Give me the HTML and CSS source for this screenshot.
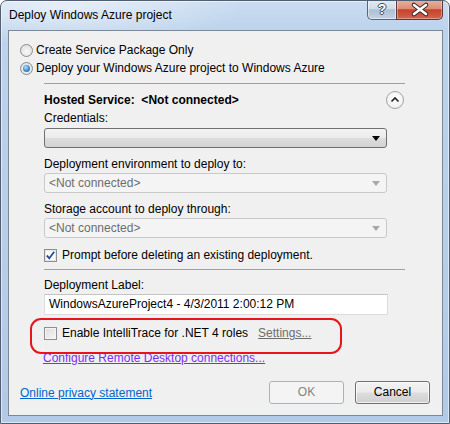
FILE: index.html
```html
<!DOCTYPE html>
<html>
<head>
<meta charset="utf-8">
<link rel="stylesheet" href="styles.css">
</head>
<body>
<div class="window">
  <div class="titlebar">
    <div class="title">Deploy Windows Azure project</div>
    <div class="caption-btns">
      <div class="btn-help">?</div>
      <div class="btn-close">
        <svg width="46" height="19" viewBox="0 0 46 19">
          <path d="M17 5 L29 14 M17 14 L29 5" stroke="#3b2a28" stroke-width="4.6" stroke-linecap="round"/>
          <path d="M17 5 L29 14 M17 14 L29 5" stroke="#ffffff" stroke-width="2.6" stroke-linecap="round"/>
        </svg>
      </div>
    </div>
  </div>
  <div class="client">
    <div class="opt"><span class="radio"></span>Create Service Package Only</div>
    <div class="opt"><span class="radio checked"></span>Deploy your Windows Azure project to Windows Azure</div>
    <div class="section">
      <div class="sep"></div>
      <div class="hosted">
        <span class="bold">Hosted Service:&nbsp; &lt;Not connected&gt;</span>
        <span class="collapse">
          <svg width="18" height="18" viewBox="0 0 18 18"><path d="M5.5 10.5 L9 7 L12.5 10.5" fill="none" stroke="#222" stroke-width="1.6"/></svg>
        </span>
      </div>
      <div class="lbl">Credentials:</div>
      <div class="combo active">
        <span class="combo-text"></span>
        <svg class="arrow" width="8" height="5" viewBox="0 0 8 5"><polygon points="0,0 8,0 4,5" fill="#000"/></svg>
      </div>
      <div class="lbl gap">Deployment environment to deploy to:</div>
      <div class="combo disabled">
        <span class="combo-text">&lt;Not connected&gt;</span>
        <svg class="arrow" width="8" height="5" viewBox="0 0 8 5"><polygon points="0,0 8,0 4,5" fill="#a8a8a8"/></svg>
      </div>
      <div class="lbl gap">Storage account to deploy through:</div>
      <div class="combo disabled">
        <span class="combo-text">&lt;Not connected&gt;</span>
        <svg class="arrow" width="8" height="5" viewBox="0 0 8 5"><polygon points="0,0 8,0 4,5" fill="#a8a8a8"/></svg>
      </div>
      <div class="chk-row prompt">
        <span class="check checked">
          <svg width="11" height="11" viewBox="0 0 11 11"><path d="M1.8 5.5 L4.3 8.3 L9.2 1.8" fill="none" stroke="#2d4e9a" stroke-width="1.9"/></svg>
        </span>
        Prompt before deleting an existing deployment.
      </div>
      <div class="sep sep2"></div>
      <div class="lbl label-dl">Deployment Label:</div>
      <div class="textbox">WindowsAzureProject4 - 4/3/2011 2:00:12 PM</div>
      <div class="chk-row intelli">
        <span class="check"></span>
        Enable IntelliTrace for .NET 4 roles
        <span class="settings">Settings...</span>
      </div>
      <div class="rdp"><span class="link-visited">Configure Remote Desktop connections...</span></div>
    </div>
    <div class="footer">
      <span class="link">Online privacy statement</span>
      <div class="buttons">
        <div class="btn btn-disabled">OK</div>
        <div class="btn">Cancel</div>
      </div>
    </div>
  </div>
</div>
</body>
</html>
```
FILE: styles.css
```css
* { box-sizing: border-box; }
body {
  margin: 0;
  font-family: "Segoe UI", "Liberation Sans", Arial, sans-serif;
  font-size: 12px;
  color: #000;
  background: #fff;
}
.window {
  width: 450px;
  height: 424px;
  display: flex;
  flex-direction: column;
  border: 1px solid #4f5f72;
  border-radius: 7px 7px 0 0;
  background:
    radial-gradient(ellipse 180px 40px at 60px 6px, rgba(255,255,255,0.55), rgba(255,255,255,0) 100%),
    linear-gradient(180deg, #cadcf0 0%, #bcd3ec 30px, #b2cae6 100%);
  box-shadow: inset 0 0 0 1px rgba(255,255,255,0.55);
  overflow: hidden;
}
.titlebar {
  height: 29px;
  flex: none;
  display: flex;
  justify-content: space-between;
  align-items: flex-start;
  padding-left: 8px;
}
.title {
  line-height: 28px;
  color: #000;
}
.caption-btns {
  display: flex;
  margin-right: 6px;
  margin-top: -1px;
}
.btn-help {
  width: 29px;
  height: 20px;
  border: 1px solid #56667a;
  border-top: none;
  border-right: none;
  border-radius: 0 0 0 5px;
  background: linear-gradient(180deg, #e3ecf6 0%, #cfdcea 45%, #aebfd2 52%, #c2d2e3 100%);
  color: #fff;
  font-weight: bold;
  font-size: 14px;
  line-height: 19px;
  text-align: center;
  text-shadow: -1px 0 #3a4a5a, 1px 0 #3a4a5a, 0 -1px #3a4a5a, 0 1px #3a4a5a;
  box-shadow: inset 0 0 0 1px rgba(255,255,255,0.5);
}
.btn-close {
  width: 47px;
  height: 20px;
  border: 1px solid #5a3a36;
  border-top: none;
  border-radius: 0 0 5px 0;
  background: linear-gradient(180deg, #eab0a2 0%, #dd8c79 45%, #c5412a 52%, #d3654a 100%);
  box-shadow: inset 0 0 0 1px rgba(255,255,255,0.35);
}
.btn-close svg { display: block; }
.client {
  flex: 1;
  margin: 0 6px 7px 7px;
  background: #f0f0f0;
  border: 1px solid #7b8896;
  display: flex;
  flex-direction: column;
  padding-top: 10px;
}
.opt {
  display: flex;
  align-items: center;
  height: 18px;
  padding-left: 11px;
}
.radio {
  width: 13px;
  height: 13px;
  border-radius: 50%;
  border: 1px solid #8b8b8b;
  background: radial-gradient(circle at 50% 60%, #f8f8f8 0%, #e2e2e2 70%, #d0d0d0 100%);
  margin-right: 3px;
  flex: none;
  display: flex;
  align-items: center;
  justify-content: center;
}
.radio.checked::after {
  content: "";
  width: 7px;
  height: 7px;
  border-radius: 50%;
  background: radial-gradient(circle at 40% 35%, #b4e2ff 0%, #4a9ad8 45%, #1c5b96 100%);
}
.section {
  margin-left: 35px;
  width: 361px;
}
.sep {
  height: 1px;
  background: #a0a0a0;
  margin-top: 6px;
}
.hosted {
  display: flex;
  justify-content: space-between;
  align-items: center;
  height: 18px;
  margin-top: 7px;
  padding-right: 1px;
}
.bold { font-weight: bold; }
.collapse {
  width: 18px;
  height: 18px;
  border-radius: 50%;
  border: 1px solid #a3a3a3;
  background: radial-gradient(circle at 50% 40%, #ffffff 0%, #ececec 100%);
  display: flex;
  align-items: center;
  justify-content: center;
}
.collapse svg { display: block; margin: -1px; }
.lbl {
  height: 18px;
  line-height: 18px;
}
.lbl.gap { margin-top: 7px; }
.combo {
  width: 343px;
  height: 20px;
  border-radius: 3px;
  display: flex;
  align-items: center;
  justify-content: space-between;
  padding: 0 6px 0 4px;
  margin-top: 1px;
}
.combo.active {
  border: 1px solid #707070;
  background: linear-gradient(180deg, #f3f3f3 0%, #ebebeb 48%, #dddddd 52%, #d3d3d3 100%);
}
.combo.disabled {
  margin-top: 0;
  border: 1px solid #c9c9c9;
  background: #f4f4f4;
  color: #6d6d6d;
}
.combo .arrow { display: block; }
.chk-row {
  display: flex;
  align-items: center;
  height: 18px;
}
.chk-row.prompt { margin-top: 8px; }
.check {
  width: 13px;
  height: 13px;
  border: 1px solid #8e8f8f;
  background: linear-gradient(135deg, #dcdcdc 0%, #f6f6f6 100%);
  box-shadow: inset 0 0 0 1px #f4f4f4;
  margin-right: 5px;
  flex: none;
  display: flex;
  align-items: center;
  justify-content: center;
}
.check.checked {
  background: #fff;
  box-shadow: inset 0 0 0 1px #e6e6e6;
}
.check svg { display: block; }
.sep2 { margin-top: 5px; }
.label-dl { margin-top: 6px; }
.textbox {
  width: 344px;
  height: 21px;
  background: #fff;
  border: 1px solid #dcdcdc;
  border-top-color: #c4c4c4;
  padding-left: 4px;
  line-height: 19px;
}
.intelli {
  margin-top: 9px;
  position: relative;
}
.intelli::before {
  content: "";
  position: absolute;
  left: -14px;
  top: -6px;
  width: 308px;
  height: 32px;
  border: 2px solid #e8141c;
  border-radius: 11px;
}
.settings {
  margin-left: 10px;
  color: #6d6d6d;
  text-decoration: underline;
}
.rdp {
  margin-top: 7px;
  height: 18px;
  line-height: 18px;
  margin-left: -1px;
}
.link-visited {
  color: #7a2ef0;
  text-decoration: underline;
}
.footer {
  margin-top: auto;
  display: flex;
  align-items: center;
  justify-content: space-between;
  padding: 0 12px 11px 11px;
}
.link {
  color: #0066cc;
  text-decoration: underline;
}
.buttons {
  display: flex;
  gap: 11px;
}
.btn {
  width: 75px;
  height: 23px;
  border: 1px solid #707070;
  border-radius: 3px;
  background: linear-gradient(180deg, #f2f2f2 0%, #ebebeb 48%, #dddddd 52%, #cfcfcf 100%);
  box-shadow: inset 0 0 0 1px rgba(255,255,255,0.7);
  text-align: center;
  line-height: 21px;
}
.btn-disabled {
  border-color: #adb2b5;
  background: #f4f4f4;
  color: #838383;
  box-shadow: none;
}
```
